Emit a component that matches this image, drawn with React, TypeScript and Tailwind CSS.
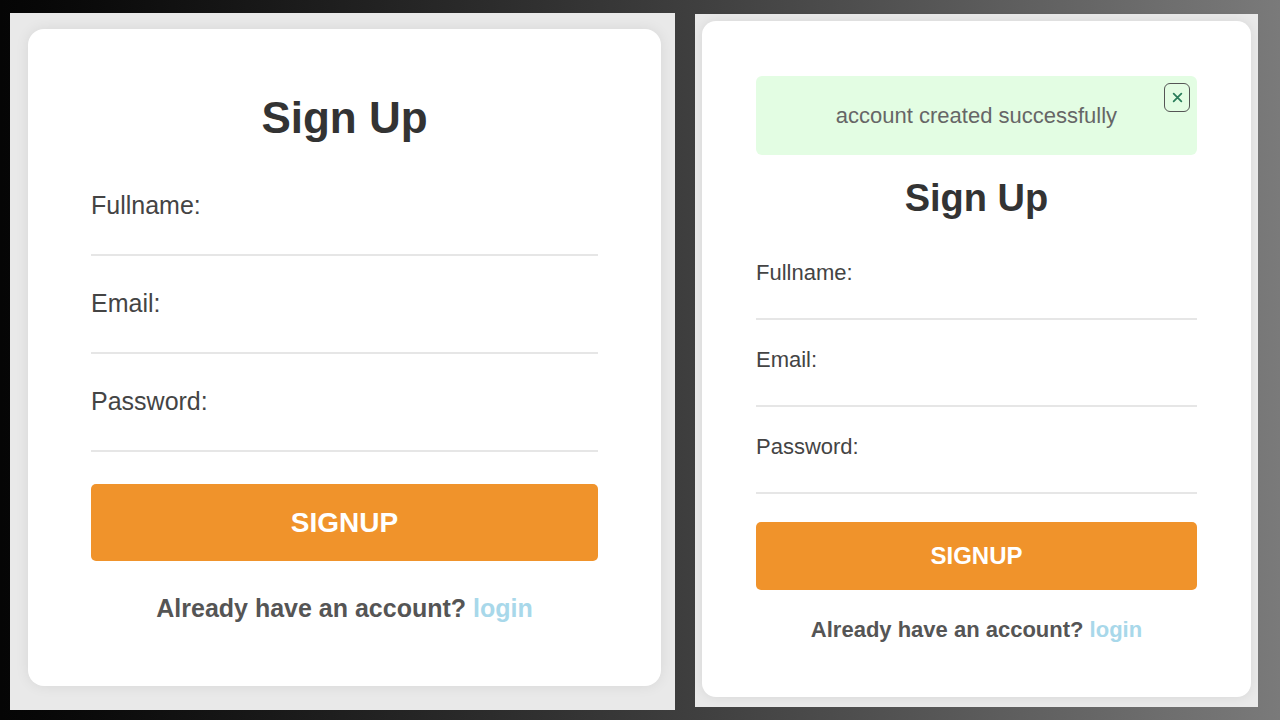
import React from 'react';

const FONT = 'font-["Liberation_Sans",Arial,sans-serif]';

interface FieldProps {
    label: string;
    big: boolean;
}

const Field: React.FC<FieldProps> = ({ label, big }) => (
    <div className="flex flex-col">
        <label className={big ? 'text-[25px] leading-[28px] text-[#444]' : 'text-[22px] leading-[26px] text-[#444]'}>{label}</label>
        <div className={big ? 'h-[37px] border-b-2 border-[#e6e6e6]' : 'h-[34px] border-b-2 border-[#e6e6e6]'} />
    </div>
);

const SignupCard: React.FC<{ big: boolean; alert?: boolean }> = ({ big, alert }) => {
    const fields = ['Fullname:', 'Email:', 'Password:'];
    return (
        <div
            className={
                big
                    ? 'bg-white rounded-[16px] w-[633px] h-[657px] shadow-[0_0_14px_rgba(0,0,0,0.08)] px-[63px] pt-[64px]'
                    : 'bg-white rounded-[14px] w-[549px] h-[676px] shadow-[0_0_12px_rgba(0,0,0,0.08)] px-[54px] pt-[55px]'
            }
        >
            {alert && (
                <div className="relative h-[79px] rounded-[6px] bg-[#e3fde3] flex items-center justify-center">
                    <span className="text-[22px] text-[#666]">account created successfully</span>
                    <button className="absolute right-[7px] top-[7px] w-[26px] h-[29px] rounded-[6px] border-[1.5px] border-[#555] flex items-center justify-center">
                        <svg width="11" height="11" viewBox="0 0 10 10">
                            <path d="M1.5 1.5 L8.5 8.5 M8.5 1.5 L1.5 8.5" stroke="#2a7d5a" strokeWidth="1.6" strokeLinecap="round" />
                        </svg>
                    </button>
                </div>
            )}
            <h1
                className={
                    big
                        ? 'text-center font-bold text-[44px] leading-[50px] text-[#333]'
                        : 'mt-[21px] text-center font-bold text-[38px] leading-[44px] text-[#333]'
                }
            >
                Sign Up
            </h1>
            <div className={big ? 'mt-[48px] flex flex-col gap-[33px]' : 'mt-[40px] flex flex-col gap-[27px]'}>
                {fields.map(f => (
                    <Field key={f} label={f} big={big} />
                ))}
            </div>
            <button
                className={
                    big
                        ? 'mt-[32px] w-full h-[77px] rounded-[5px] bg-[#f0932b] text-white font-bold text-[28px]'
                        : 'mt-[28px] w-full h-[68px] rounded-[5px] bg-[#f0932b] text-white font-bold text-[24px]'
                }
            >
                SIGNUP
            </button>
            <p
                className={
                    big
                        ? 'mt-[32px] text-center font-bold text-[25px] leading-[30px] text-[#555]'
                        : 'mt-[27px] text-center font-bold text-[22px] leading-[26px] text-[#555]'
                }
            >
                Already have an account? <a className="text-[#a8d8ea]">login</a>
            </p>
        </div>
    );
};

export default function App() {
    return (
        <div className={`${FONT} w-[1280px] h-[720px] bg-gradient-to-r from-[#050505] to-[#7a7a7a] flex items-start pl-[10px] gap-[20px]`}>
            <div className="mt-[13px] w-[665px] h-[697px] bg-[#e9e9e9] pl-[18px] pt-[16px]">
                <SignupCard big />
            </div>
            <div className="mt-[14px] w-[563px] h-[693px] bg-[#e9e9e9] pl-[7px] pt-[7px]">
                <SignupCard big={false} alert />
            </div>
        </div>
    );
}
